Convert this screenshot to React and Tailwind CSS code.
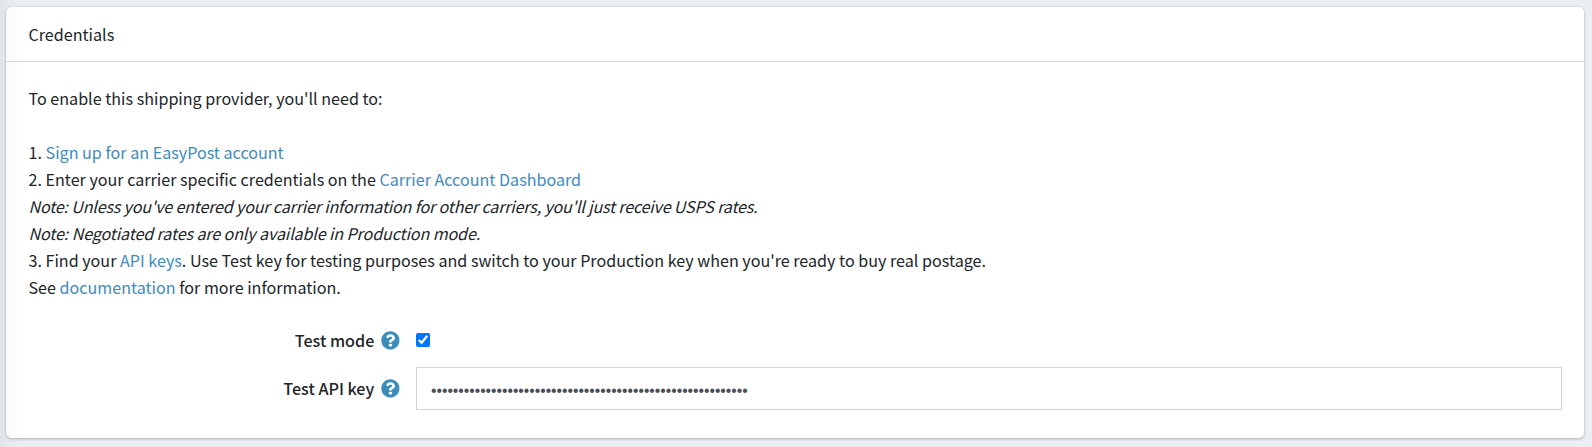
import { FaQuestionCircle } from 'react-icons/fa';

const LINK = 'text-[#428bbc]';

function Label({ children }) {
  return (
    <label className="flex w-[371.5px] shrink-0 items-center justify-end gap-[7px] font-medium">
      <span>{children}</span>
      <FaQuestionCircle className="h-[18.75px] w-[18.75px] shrink-0 text-[#3c8dbc]" aria-hidden="true" />
    </label>
  );
}

export default function App() {
  return (
    <main className="relative h-[447px] overflow-hidden bg-[#ebeef3] pt-[7px] pr-2 pl-1.5 font-['Noto_Sans_CJK_SC',sans-serif] text-[16.12px] leading-[27px] whitespace-nowrap text-[#212529]">
      <section className="h-[431px] rounded-[5px] bg-white shadow-[0_0_1px_rgba(0,0,0,0.2),0_1px_3px_rgba(0,0,0,0.25)]">
        <header className="flex h-[55px] items-center border-b border-[#dcdde0] px-[22.5px]">
          <h3>Credentials</h3>
        </header>
        <div className="pt-[23px] pr-[22px] pl-[22.5px]">
          <p>To enable this shipping provider, you'll need to:</p>
          <div className="pt-[27px]">
            <p>1. <a className={LINK}>Sign up for an EasyPost account</a></p>
            <p>2. Enter your carrier specific credentials on the <a className={LINK}>Carrier Account Dashboard</a></p>
            <p className="tracking-[-0.19px] italic">Note: Unless you've entered your carrier information for other carriers, you'll just receive USPS rates.</p>
            <p className="tracking-[-0.13px] italic">Note: Negotiated rates are only available in Production mode.</p>
            <p>3. Find your <a className={LINK}>API keys</a>. Use Test key for testing purposes and switch to your Production key when you're ready to buy real postage.</p>
            <p>See <a className={LINK}>documentation</a> for more information.</p>
          </div>
          <div className="mt-[26px] flex h-[27px] items-center gap-4">
            <Label>Test mode</Label>
            <input type="checkbox" defaultChecked className="mb-px h-[14px] w-[14px] accent-[#0075ff]" />
          </div>
          <div className="mt-[13px] flex items-center gap-4">
            <Label>Test API key</Label>
            <div className="flex h-[43px] grow items-center border border-[#ced4da] pt-[3px] pl-[14px] font-['Liberation_Sans',sans-serif] text-[15.6px] text-[#495057]">
              {'•'.repeat(58)}
            </div>
          </div>
        </div>
      </section>
      <div className="pointer-events-none absolute inset-y-0 left-0 w-[26px] bg-linear-to-r from-black/5 via-black/2 via-25% to-transparent" />
    </main>
  );
}
